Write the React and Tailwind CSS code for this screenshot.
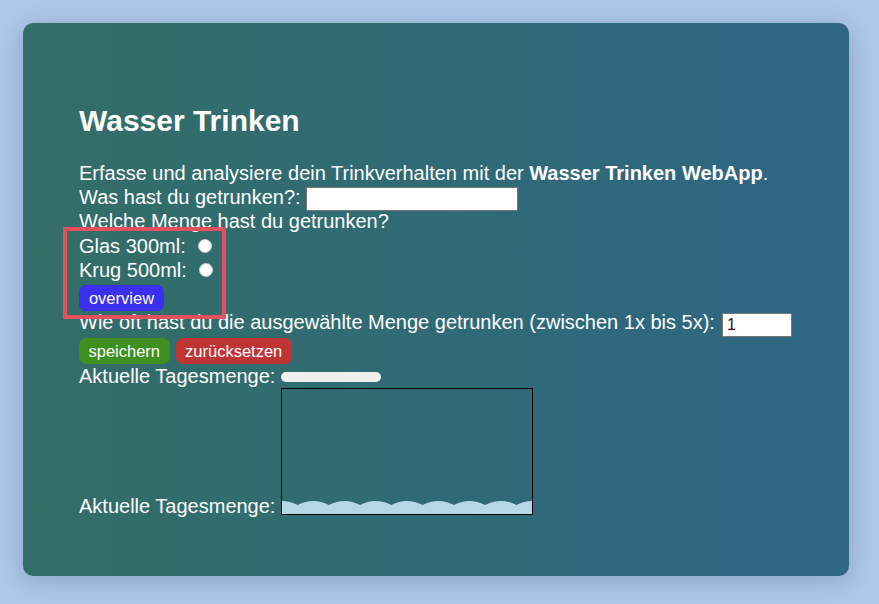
import React from "react";

function Wave() {
  let d = "M-15.625,5";
  for (let i = 0; i < 9; i++) {
    const peak = i * 31.25;
    d += ` Q${peak},-3 ${peak + 15.625},5`;
  }
  d += " L270,14 L-20,14 Z";
  return (
    <svg width="250" height="14" viewBox="0 0 250 14" className="block" preserveAspectRatio="none">
      <path d={d} fill="#b4d8e6" />
    </svg>
  );
}

function Btn({ className, children }) {
  return (
    <div
      className={`h-[26px] px-[9.5px] rounded-[7px] text-white text-[16.5px] leading-[26px] ${className}`}
    >
      {children}
    </div>
  );
}

function Radio() {
  return <span className="ml-[12px] mt-[5px] w-[14px] h-[14px] rounded-full bg-white border border-[#c8c8c8] self-start" />;
}

export default function App() {
  return (
    <div
      className="w-[879px] h-[604px] p-[23px] bg-[#aec8e9]"
      style={{ fontFamily: '"Liberation Sans", Arial, sans-serif' }}
    >
      <div className="relative w-[826px] h-[553px] rounded-[10px] bg-gradient-to-r from-[#336e67] to-[#2e6684] shadow-[0_4px_24px_rgba(30,50,90,0.25)] pl-[56px] pt-[81px] text-white">
        <h1 className="text-[30px] leading-[34px] font-bold">Wasser Trinken</h1>
        <div className="mt-[23px] text-[20px] leading-[24px]">
          <div className="h-[24px]">
            Erfasse und analysiere dein Trinkverhalten mit der <b>Wasser Trinken WebApp</b>.
          </div>
          <div className="h-[24px] flex">
            <span>Was hast du getrunken?:</span>
            <div className="ml-[5px] mt-[2px] w-[212px] h-[24px] bg-white border border-[#777]" />
          </div>
          <div className="h-[25px]">Welche Menge hast du getrunken?</div>
          <div className="h-[24px] flex">
            <span>Glas 300ml:</span>
            <Radio />
          </div>
          <div className="h-[24px] flex">
            <span>Krug 500ml:</span>
            <Radio />
          </div>
          <div className="h-[28px] flex items-start">
            <div className="mt-[3px] h-[26px] w-[85px] rounded-[7px] bg-[#3b2ff0] text-[16.5px] leading-[26px] text-center">
              overview
            </div>
          </div>
          <div className="h-[28px] flex">
            <span>Wie oft hast du die ausgewählte Menge getrunken (zwischen 1x bis 5x):</span>
            <div className="ml-[7px] mt-[3px] w-[70px] h-[24px] bg-white border border-[#777] text-[#3a0a0a] text-[16px] leading-[22px] pl-[4px]">
              1
            </div>
          </div>
          <div className="h-[26px] flex gap-[6px]">
            <Btn className="bg-[#3f901f]">speichern</Btn>
            <Btn className="bg-[#bf3434]">zurücksetzen</Btn>
          </div>
          <div className="h-[24px] flex">
            <span>Aktuelle Tagesmenge:</span>
            <div className="ml-[6px] mt-[8px] w-[100px] h-[10px] rounded-full bg-[#efefef]" />
          </div>
          <div className="flex items-end">
            <span className="-mb-[3px]">Aktuelle Tagesmenge:</span>
            <div className="ml-[6px] w-[252px] h-[127px] border border-black flex flex-col justify-end overflow-hidden">
              <Wave />
            </div>
          </div>
        </div>
        <div className="absolute left-[40px] top-[204px] w-[163px] h-[92px] border-[4px] border-[#e4505c]" />
      </div>
    </div>
  );
}
